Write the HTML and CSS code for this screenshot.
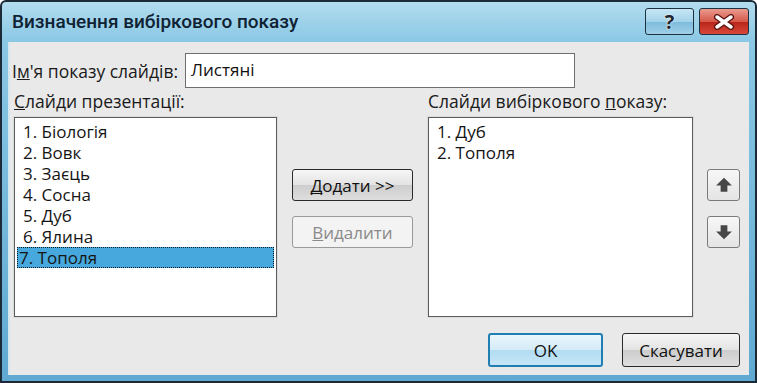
FILE: index.html
```html
<!DOCTYPE html>
<html>
<head>
    <title>Визначення вибіркового показу</title>
    <link rel="stylesheet" href="styles.css">
</head>
<body>
    <div class="window">
        <div class="titlebar">
            <span class="title">Визначення вибіркового показу</span>
            <div class="caption-buttons">
                <span class="cap-btn help">?</span>
                <span class="cap-btn close">
                    <svg width="24" height="16" viewBox="0 0 24 16">
                        <path d="M5 3 L19 13 M19 3 L5 13" stroke="#5a1410" stroke-width="6" stroke-linecap="round"/>
                        <path d="M5 3 L19 13 M19 3 L5 13" stroke="#ffffff" stroke-width="3.5" stroke-linecap="round"/>
                    </svg>
                </span>
            </div>
        </div>

        <div class="client">
            <div class="name-row">
                <label class="lbl" for="showName">І<u>м</u>'я показу слайдів:</label>
                <div class="textbox" id="showName">Листяні</div>
            </div>

            <div class="lists">
                <div class="col-left">
                    <div class="lbl"><u>С</u>лайди презентації:</div>
                    <ul class="listbox">
                        <li>1. Біологія</li>
                        <li>2. Вовк</li>
                        <li>3. Заєць</li>
                        <li>4. Сосна</li>
                        <li>5. Дуб</li>
                        <li>6. Ялина</li>
                        <li class="selected">7. Тополя</li>
                    </ul>
                </div>

                <div class="col-mid">
                    <button class="btn"><u>Д</u>одати &gt;&gt;</button>
                    <button class="btn disabled"><u>В</u>идалити</button>
                </div>

                <div class="col-right">
                    <div class="lbl">Слайди вибіркового <u>п</u>оказу:</div>
                    <ul class="listbox">
                        <li>1. Дуб</li>
                        <li>2. Тополя</li>
                    </ul>
                </div>

                <div class="col-arrows">
                    <button class="arrow-btn">
                        <svg width="18" height="18" viewBox="0 0 16 16">
                            <path d="M8 1.5 L15 8.5 L11 8.5 L11 14 L5 14 L5 8.5 L1 8.5 Z" fill="#474747"/>
                        </svg>
                    </button>
                    <button class="arrow-btn">
                        <svg width="18" height="18" viewBox="0 0 16 16">
                            <path d="M8 14.5 L15 7.5 L11 7.5 L11 2 L5 2 L5 7.5 L1 7.5 Z" fill="#474747"/>
                        </svg>
                    </button>
                </div>
            </div>

            <div class="footer">
                <button class="btn big default">OK</button>
                <button class="btn big">Скасувати</button>
            </div>
        </div>
    </div>
</body>
</html>
```

FILE: styles.css
```css
body {
    margin: 0;
    background-color: #ffffff;
    font-family: 'Open Sans', 'Noto Sans', Arial, sans-serif;
}

.window {
    width: 757px;
    height: 383px;
    box-sizing: border-box;
    border: 2px solid #1b2a36;
    border-radius: 6px 6px 0 0;
    background: linear-gradient(to bottom, #b2dcef 0px, #8ac8e4 40px, #5fa9d2 100%);
    display: flex;
    flex-direction: column;
    overflow: hidden;
}

.titlebar {
    height: 40px;
    display: flex;
    align-items: center;
    justify-content: space-between;
    padding: 0 6px 0 10px;
    flex-shrink: 0;
}

.title {
    font-family: Roboto, 'Open Sans', sans-serif;
    font-size: 19px;
    font-weight: 500;
    color: #0f2233;
    margin-top: -2px;
}

.caption-buttons {
    display: flex;
    gap: 5px;
    align-self: flex-start;
    margin-top: 6px;
}

.cap-btn {
    height: 27px;
    box-sizing: border-box;
    border: 1px solid #1d3140;
    border-radius: 3px;
    display: flex;
    align-items: center;
    justify-content: center;
}

.help {
    width: 49px;
    background: linear-gradient(to bottom, #c6e6f5 0%, #a3d2ea 50%, #7cbadb 51%, #9fd0e8 100%);
    font-weight: 700;
    font-size: 20px;
    color: #1c2630;
    line-height: 1;
    text-shadow: 0 0 2px #ffffff, 0 0 1px #ffffff;
}

.close {
    width: 50px;
    background: linear-gradient(to bottom, #e99b8f 0%, #d6594a 50%, #b8231a 51%, #d8483a 100%);
}

.client {
    flex: 1;
    margin: 0 6px 6px 6px;
    background-color: #e9e9e9;
    border-left: 2px solid #d6e6ee;
    padding: 0 0 0 4px;
    display: flex;
    flex-direction: column;
}

u {
    text-decoration: underline;
    text-decoration-skip-ink: none;
}

.lbl {
    font-size: 17.5px;
    color: #1a1a1a;
    white-space: nowrap;
}

.name-row {
    display: flex;
    align-items: center;
    gap: 7px;
    margin-top: 11px;
    margin-left: -2px;
}

.textbox {
    width: 390px;
    height: 35px;
    box-sizing: border-box;
    border: 1px solid #6e6e6e;
    background-color: #ffffff;
    font-size: 17px;
    padding: 4px 5px;
    color: #111;
}

.lists {
    display: flex;
    margin-top: 1px;
}

.col-left {
    width: 263px;
}

.col-right {
    width: 265px;
}

.listbox {
    list-style: none;
    margin: 4px 0 0 0;
    padding: 3px 2px;
    height: 200px;
    box-sizing: border-box;
    border: 1px solid #5c5c5c;
    background-color: #ffffff;
    box-shadow: 0 0 0 1px #d9dde0;
}

.listbox li {
    font-size: 17px;
    line-height: 19px;
    padding-left: 5px;
    color: #151515;
    border: 1px dotted transparent;
}

.listbox li.selected {
    background-color: #46a8dc;
    border: 1px dotted #0c1e2a;
    padding-left: 1px;
}

.col-mid {
    width: 121px;
    margin-left: 15px;
    margin-right: 15px;
    padding-top: 80px;
    display: flex;
    flex-direction: column;
    gap: 15px;
}

.btn {
    font-family: 'Open Sans', 'Noto Sans', Arial, sans-serif;
    font-size: 17px;
    height: 32px;
    border: 1px solid #2a2a2a;
    border-radius: 3px;
    background: linear-gradient(to bottom, #f6f6f6 0%, #e3e3e3 50%, #cdcdcd 51%, #dedede 100%);
    color: #111;
    padding: 0;
}

.btn.disabled {
    border-color: #9a9a9a;
    background: #f3f3f3;
    color: #8a8a8a;
}

.col-arrows {
    margin-left: 14px;
    padding-top: 80px;
    display: flex;
    flex-direction: column;
    gap: 15px;
}

.arrow-btn {
    width: 33px;
    height: 32px;
    border: 1px solid #7b7b7b;
    border-radius: 3px;
    background: linear-gradient(to bottom, #f7f7f7, #e4e4e4);
    display: flex;
    align-items: center;
    justify-content: center;
    padding: 0;
}

.footer {
    display: flex;
    justify-content: flex-end;
    gap: 19px;
    margin-top: 16px;
    padding-right: 9px;
}

.btn.big {
    width: 118px;
    height: 34px;
}

.btn.default {
    width: 115px;
    border: 2px solid #1f7fb3;
    background: linear-gradient(to bottom, #eaf6fc 0%, #d3ebf8 50%, #b2dcf2 51%, #c6e6f7 100%);
}
```
